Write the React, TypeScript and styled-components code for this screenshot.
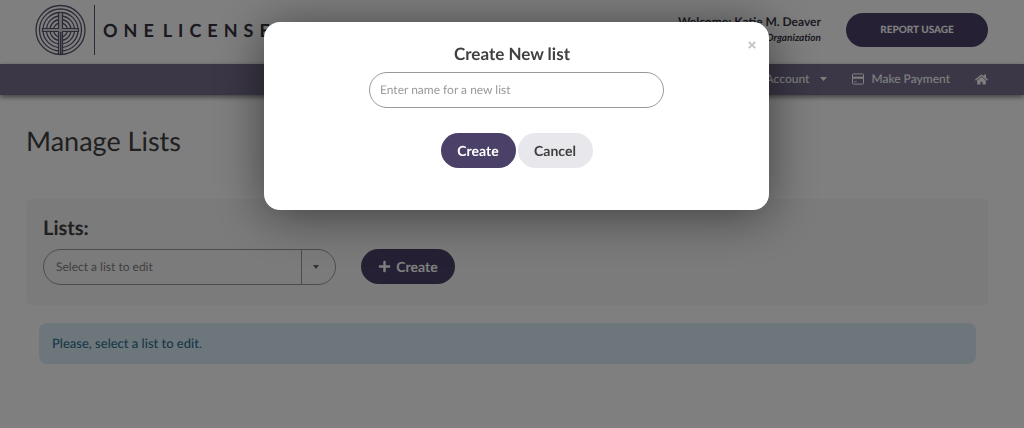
import React from "react";
import styled, { createGlobalStyle } from "styled-components";
import { FaHome, FaPlus } from "react-icons/fa";

const GlobalStyle = createGlobalStyle`
  *, *::before, *::after { box-sizing: border-box; }
  body {
    margin: 0;
    background: #fff;
    color: #404040;
    font-family: Lato, "Liberation Sans", sans-serif;
    font-size: 14px;
    line-height: 20px;
    text-rendering: geometricPrecision;
  }
  button, input, select { font: inherit; text-rendering: inherit; }
  h1, h2, p { margin: 0; }
`;

const Header = styled.header`
  display: flex;
  align-items: center;
  justify-content: space-between;
  height: 64px;
  padding: 0 36px 4px 35px;
`;

const Brand = styled.a`
  display: flex;
  align-items: center;
  color: #35323f;
  text-decoration: none;
`;

const BrandName = styled.span`
  display: flex;
  gap: 3px;
  margin-left: 8px;
  padding-left: 8px;
  border-left: 1px solid #5d5773;
  font-size: 18px;
  font-weight: 700;
  letter-spacing: 6px;
  line-height: 50px;
`;

const UserArea = styled.div`
  display: flex;
  align-items: center;
  gap: 25px;
`;

const Welcome = styled.div`
  text-align: right;
  color: #3a3645;
  font-size: 12px;
  font-weight: 700;
  line-height: 17px;
`;

const Organization = styled.em`
  display: block;
  font-size: 10px;
`;

const Pill = styled.button<{ $tone?: "primary" | "muted"; $width: number; $small?: boolean }>`
  display: inline-flex;
  align-items: center;
  justify-content: center;
  gap: 5px;
  width: ${(p) => p.$width}px;
  height: ${(p) => (p.$small ? 34 : 35)}px;
  padding: 0;
  border: 0;
  border-radius: 18px;
  background: ${(p) => (p.$tone === "muted" ? "#e8e7ec" : "#4b4068")};
  color: ${(p) => (p.$tone === "muted" ? "#404040" : "#fff")};
  font-size: ${(p) => (p.$small ? 10 : 14)}px;
  font-weight: ${(p) => (p.$small ? 900 : 700)};
  cursor: pointer;
`;

const Nav = styled.nav`
  display: flex;
  align-items: center;
  justify-content: flex-end;
  gap: 25px;
  height: 31px;
  padding: 0 36px 1px 0;
  background: #766e8c;
  box-shadow: 0 2px 5px rgba(0, 0, 0, 0.5);
`;

const NavLink = styled.a<{ $gap?: number }>`
  display: flex;
  align-items: center;
  gap: ${(p) => p.$gap ?? 7}px;
  color: #fff;
  font-size: 12px;
  font-weight: 500;
  text-decoration: none;
  svg { display: block; }
`;

const Main = styled.main`
  padding: 28px 36px 0 26px;
`;

const PageTitle = styled.h1`
  font-size: 27px;
  font-weight: 400;
  line-height: 36px;
`;

const ListsPanel = styled.section`
  margin-top: 40px;
  padding: 17px 17px 20px;
  border-radius: 4px;
  background: #f7f7f7;
`;

const PanelTitle = styled.h2`
  font-size: 20px;
  font-weight: 700;
  line-height: 24px;
`;

const ListControls = styled.div`
  display: flex;
  align-items: flex-start;
  gap: 25px;
  padding-top: 9px;
`;

const SelectShell = styled.div`
  display: grid;
  grid-template-columns: 1fr 34px;
  width: 293px;
  height: 36px;
  border: 1px solid #999;
  border-radius: 18px;
`;

const ListSelect = styled.select`
  grid-area: 1 / 1 / 2 / 3;
  min-width: 0;
  padding: 0 40px 1px 12px;
  border: 0;
  border-radius: 18px;
  appearance: none;
  background: transparent;
  color: #808080;
  font-size: 12px;
`;

const SelectArrow = styled.span`
  grid-area: 1 / 2;
  display: flex;
  align-items: center;
  padding-left: 11px;
  border-left: 1px solid #999;
  pointer-events: none;
`;

const Notice = styled.p`
  margin: 18px 12px 0 13px;
  padding: 10px 13px 11px;
  border-radius: 8px;
  background: #d9edf7;
  color: #31708f;
  font-size: 13px;
  font-weight: 500;
`;

const Backdrop = styled.div`
  position: fixed;
  inset: 0;
  display: flex;
  align-items: flex-start;
  justify-content: center;
  padding: 22px 0 0 9px;
  background: rgba(0, 0, 0, 0.5);
`;

const Dialog = styled.form`
  position: relative;
  display: flex;
  flex-direction: column;
  align-items: center;
  width: 505px;
  max-width: 100%;
  padding: 20px 20px 42px;
  border-radius: 16px;
  background: #fff;
  box-shadow: 0 5px 50px rgba(0, 0, 0, 0.5);
`;

const DialogTitle = styled.label`
  padding-right: 9px;
  font-size: 17px;
  font-weight: 700;
  line-height: 24px;
`;

const NameInput = styled.input`
  width: 295px;
  height: 36px;
  margin-top: 6px;
  padding: 0 10px 1px;
  border: 1px solid #999;
  border-radius: 18px;
  color: #404040;
  font-size: 12px;
  &::placeholder { color: #999; opacity: 1; }
`;

const DialogActions = styled.div`
  display: flex;
  gap: 2px;
  margin-top: 25px;
`;

const CloseButton = styled.button`
  position: absolute;
  top: 14px;
  right: 8px;
  display: grid;
  place-items: center;
  width: 18px;
  height: 18px;
  padding: 0;
  border: 0;
  background: none;
  color: #c4c4c4;
  cursor: pointer;
`;

function Emblem() {
  return (
    <svg width="51" height="52" viewBox="0 0 51 52" fill="none" stroke="#5d5773" aria-hidden="true">
      {[24.5, 21, 17.5, 14, 10.5, 7].map((r) => (
        <circle key={r} cx="25.5" cy="26" r={r} strokeWidth="1.3" />
      ))}
      <path
        d="M23.5 8.5h4v16h16v3h-16V50h-4V27.5h-16v-3h16z"
        fill="#d8d6dd"
        strokeWidth="1.2"
      />
      <path d="M25.7 28v22" strokeWidth="1.4" />
    </svg>
  );
}

function CardIcon() {
  return (
    <svg width="12" height="12" viewBox="0 0 12 12" aria-hidden="true">
      <rect x=".5" y=".9" width="11" height="10.2" rx=".8" fill="none" stroke="#fff" />
      <path d="M1 3.7h10v2H1z" fill="#fff" />
      <path d="M2.3 8.7h2.4" stroke="#fff" strokeWidth=".8" />
    </svg>
  );
}

function Caret({ width, height, color }: { width: number; height: number; color: string }) {
  return (
    <svg width={width} height={height} viewBox="0 0 8 5" preserveAspectRatio="none" aria-hidden="true">
      <path d="M0 0h8L4 5z" fill={color} />
    </svg>
  );
}

export default function App() {
  return (
    <>
      <GlobalStyle />
      <Header>
        <Brand href="#">
          <Emblem />
          <BrandName>
            <span>ONE</span>
            <span>LICENSE</span>
          </BrandName>
        </Brand>
        <UserArea>
          <Welcome>
            Welcome: Katie M. Deaver
            <Organization>Organization</Organization>
          </Welcome>
          <Pill type="button" $width={142} $small>REPORT USAGE</Pill>
        </UserArea>
      </Header>
      <Nav>
        <NavLink href="#" $gap={11}>
          Account <Caret width={7} height={4} color="#fff" />
        </NavLink>
        <NavLink href="#">
          <CardIcon /> Make Payment
        </NavLink>
        <NavLink href="#" aria-label="Home">
          <FaHome size={13} />
        </NavLink>
      </Nav>
      <Main>
        <PageTitle>Manage Lists</PageTitle>
        <ListsPanel>
          <PanelTitle>
            <label htmlFor="list">Lists:</label>
          </PanelTitle>
          <ListControls>
            <SelectShell>
              <ListSelect id="list" defaultValue="">
                <option value="">Select a list to edit</option>
              </ListSelect>
              <SelectArrow>
                <Caret width={6} height={4} color="#666" />
              </SelectArrow>
            </SelectShell>
            <Pill type="button" $width={94}>
              <FaPlus size={13} /> Create
            </Pill>
          </ListControls>
        </ListsPanel>
        <Notice>Please, select a list to edit.</Notice>
      </Main>
      <Backdrop>
        <Dialog role="dialog" aria-modal="true" onSubmit={(e) => e.preventDefault()}>
          <CloseButton type="button" aria-label="Close">
            <svg width="8" height="8" viewBox="0 0 8 8" aria-hidden="true">
              <path d="M.8.8l6.4 6.4M7.2.8L.8 7.2" stroke="currentColor" strokeWidth="1.9" />
            </svg>
          </CloseButton>
          <DialogTitle htmlFor="list-name">Create New list</DialogTitle>
          <NameInput id="list-name" placeholder="Enter name for a new list" />
          <DialogActions>
            <Pill type="submit" $width={75}>Create</Pill>
            <Pill type="button" $width={75} $tone="muted">Cancel</Pill>
          </DialogActions>
        </Dialog>
      </Backdrop>
    </>
  );
}
